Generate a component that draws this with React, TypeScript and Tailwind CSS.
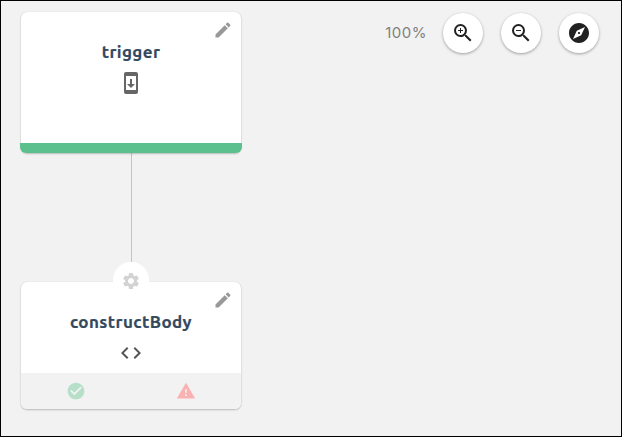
import type { ReactNode } from "react";
import {
  MdCheckCircle,
  MdCode,
  MdEdit,
  MdExplore,
  MdSettings,
  MdSystemUpdate,
  MdWarning,
  MdZoomIn,
  MdZoomOut,
} from "react-icons/md";

const cardShadow = "shadow-[0_1px_2px_rgba(0,0,0,0.22),0_0_1px_rgba(0,0,0,0.16)]";

function RoundButton({ label, children }: { label: string; children: ReactNode }) {
  return (
    <button
      aria-label={label}
      className="flex size-10 items-center justify-center rounded-full bg-white text-[#212121] shadow-[0_1px_3px_rgba(0,0,0,0.35)]"
    >
      {children}
    </button>
  );
}

function Title({ children }: { children: ReactNode }) {
  return (
    <h2 className="text-center text-[17px] leading-6 font-bold tracking-[0.4px] whitespace-nowrap text-[#34495e] [-webkit-text-stroke:0.2px_#34495e]">{children}</h2>
  );
}

export default function App() {
  return (
    <main className="flex h-[437px] w-[622px] items-start justify-between overflow-hidden border border-black bg-[#f2f2f2] pt-[11px] pr-[22px] pl-5 font-['Ubuntu','Noto_Sans',sans-serif]">
      <section className="flex w-[220px] flex-col items-center">
        <article className={`relative flex h-[141px] w-full flex-col items-center rounded-md bg-white pt-7 ${cardShadow}`}>
          <MdEdit size={20} className="absolute top-2 right-2 text-[#999]" />
          <Title>trigger</Title>
          <MdSystemUpdate size={24} className="mt-[7px] text-[#666]" />
          <div className="mt-auto h-2.5 w-[222px] shrink-0 rounded-b-md bg-[#5bc08d]" />
        </article>
        <div className="ml-px h-[109px] w-px bg-[#c4c4c4]" />
        <div className="z-10 -mb-4 flex size-9 items-center justify-center rounded-full bg-white">
          <MdSettings size={20} className="mt-0.5 text-[#d3d3d3]" />
        </div>
        <article className={`relative flex h-[127px] w-full flex-col items-center overflow-hidden rounded-md bg-white pt-7 ${cardShadow}`}>
          <MdEdit size={20} className="absolute top-2 right-2 text-[#999]" />
          <Title>constructBody</Title>
          <MdCode size={24} className="mt-[7px] text-[#555]" />
          <footer className="mt-auto grid h-9 w-full grid-cols-2 place-items-center bg-[#f2f2f2]">
            <MdCheckCircle size={20} className="text-[#b5dfc9]" />
            <MdWarning size={20} className="text-[#fab1b1]" />
          </footer>
        </article>
      </section>
      <nav className="mt-px flex items-center gap-[18px]">
        <span className="-mr-0.5 font-['Inter',sans-serif] text-[15px] tracking-[0.5px] text-[#808080]">100%</span>
        <RoundButton label="Zoom in"><MdZoomIn size={24} /></RoundButton>
        <RoundButton label="Zoom out"><MdZoomOut size={24} /></RoundButton>
        <RoundButton label="Explore"><MdExplore size={24} /></RoundButton>
      </nav>
    </main>
  );
}
